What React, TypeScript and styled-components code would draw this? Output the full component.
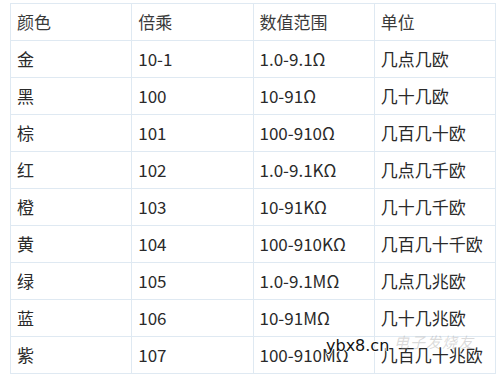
import React from "react";
import styled, { createGlobalStyle } from "styled-components";

const GlobalStyle = createGlobalStyle`
  html, body {
    margin: 0;
    padding: 0;
    background: #ffffff;
  }
`;

const Page = styled.div`
  position: relative;
  width: 503px;
  height: 378px;
  padding: 3px 0 0 10px;
  box-sizing: border-box;
  overflow: hidden;
`;

const Table = styled.table`
  border-collapse: collapse;
  table-layout: fixed;
  width: 486px;
  font-family: "Noto Sans CJK SC", "Microsoft YaHei", sans-serif;
  font-size: 17px;
  color: #2a2a2a;
`;

const Cell = styled.td<{ $head?: boolean }>`
  border: 1px solid #dfe9f2;
  height: 36px;
  padding: 0 0 0 6px;
  line-height: 36px;
  white-space: nowrap;
  color: ${(p) => (p.$head ? "#3a3a3a" : "#2a2a2a")};
  vertical-align: middle;
`;

const Watermark = styled.div`
  position: absolute;
  left: 326px;
  top: 336px;
  font-family: "DejaVu Sans", sans-serif;
  font-size: 16px;
  color: #111;
  text-shadow: -1px 0 #fff, 1px 0 #fff, 0 -1px #fff, 0 1px #fff;
`;

const Logo = styled.div`
  position: absolute;
  left: 394px;
  top: 331px;
  font-family: "Noto Sans CJK SC", sans-serif;
  font-size: 15px;
  color: rgba(150, 150, 150, 0.35);
  letter-spacing: 1px;
  font-style: italic;
`;

const rows: string[][] = [
  ["颜色", "倍乘", "数值范围", "单位"],
  ["金", "10-1", "1.0-9.1Ω", "几点几欧"],
  ["黑", "100", "10-91Ω", "几十几欧"],
  ["棕", "101", "100-910Ω", "几百几十欧"],
  ["红", "102", "1.0-9.1KΩ", "几点几千欧"],
  ["橙", "103", "10-91KΩ", "几十几千欧"],
  ["黄", "104", "100-910KΩ", "几百几十千欧"],
  ["绿", "105", "1.0-9.1MΩ", "几点几兆欧"],
  ["蓝", "106", "10-91MΩ", "几十几兆欧"],
  ["紫", "107", "100-910MΩ", "几百几十兆欧"],
];

export default function App() {
  return (
    <Page>
      <GlobalStyle />
      <Table>
        <tbody>
          {rows.map((r, i) => (
            <tr key={i}>
              {r.map((c, j) => (
                <Cell key={j} $head={i === 0}>
                  {c}
                </Cell>
              ))}
            </tr>
          ))}
        </tbody>
      </Table>
      <Logo>电子发烧友</Logo>
      <Watermark>ybx8.cn</Watermark>
    </Page>
  );
}
